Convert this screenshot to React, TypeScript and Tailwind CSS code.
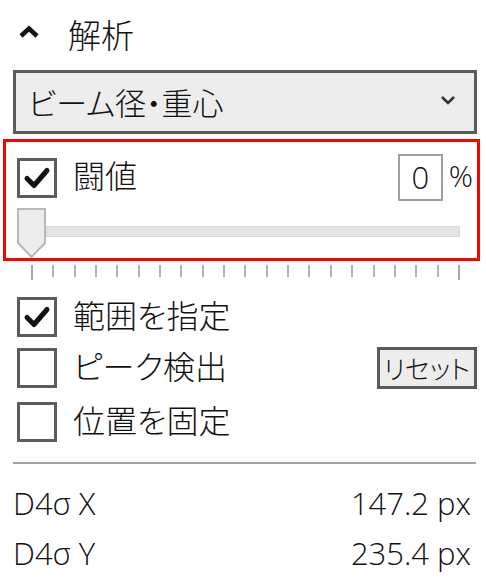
const jp = "[font-family:'Noto_Sans_CJK_JP',sans-serif] [font-feature-settings:'palt'] font-light";
const latin = "[font-family:'Open_Sans','Noto_Sans_CJK_JP',sans-serif] font-light";

function CheckBox({ checked }: { checked?: boolean }) {
  return (
    <div className="w-[40px] h-[40px] border-[3px] border-[#5c5c5c] bg-white flex items-center justify-center shrink-0">
      {checked && (
        <svg width="30" height="30" viewBox="0 0 30 30">
          <path d="M5 15.5 L12 22.5 L25 7.5" fill="none" stroke="#111" strokeWidth="5" strokeLinecap="round" strokeLinejoin="round" />
        </svg>
      )}
    </div>
  );
}

function Ticks() {
  const ticks = Array.from({ length: 21 }, (_, i) => i);
  return (
    <div className="ml-[18px] w-[429px] h-[16px] flex justify-between items-start">
      {ticks.map((i) => (
        <div
          key={i}
          className={i === 0 || i === 20 ? "w-[2px] h-[15px] bg-[#a8a8a8]" : "w-[2px] h-[12px] bg-[#b4b4b4]"}
        />
      ))}
    </div>
  );
}

export default function App() {
  return (
    <div className="w-[486px] h-[581px] bg-white text-[#111] pl-[13px] overflow-hidden">
      <div className="mt-[16px] h-[36px] flex items-center">
        <svg className="ml-[5px] mt-[-4px]" width="22" height="14" viewBox="0 0 22 14">
          <path d="M3 11 L11 3.5 L19 11" fill="none" stroke="#111" strokeWidth="4.5" strokeLinejoin="miter" />
        </svg>
        <span className={`${jp} ml-[28px] text-[33px] leading-none`}>解析</span>
      </div>

      <div className="mt-[18px] w-[464px] h-[64px] border-[3px] border-[#5a5a5a] bg-[#ededed] flex items-center justify-between pl-[12px] pr-[18px]">
        <span className={`${jp} text-[31px] leading-none -mt-[2px]`}>ビーム径・重心</span>
        <svg width="16" height="10" viewBox="0 0 16 10" className="-mt-[4px]">
          <path d="M2 2 L8 8 L14 2" fill="none" stroke="#333" strokeWidth="2.5" />
        </svg>
      </div>

      <div className="-ml-[10px] mt-[5px] w-[477px] h-[122px] border-[3px] border-[#ff0000] pl-[11px]">
        <div className="mt-[12px] h-[47px] flex items-center">
          <CheckBox checked />
          <span className={`${jp} ml-[16px] text-[32px] leading-none -mt-[8px]`}>闘値</span>
          <div className="ml-auto w-[45px] h-[47px] border-2 border-[#a0a0a0] flex items-center justify-center">
            <span className={`${latin} text-[31px] leading-none`}>0</span>
          </div>
          <span className={`${latin} ml-[6px] mr-[4px] text-[30px] leading-none -mt-[4px]`}>%</span>
        </div>
        <div className="mt-[7px] h-[50px] flex items-start">
          <svg width="29" height="50" viewBox="0 0 29 50" className="shrink-0">
            <path d="M1 1 H28 V35 L14.5 49 L1 35 Z" fill="#ececec" stroke="#b8b8b8" strokeWidth="2" />
          </svg>
          <div className="mt-[18px] w-[414px] h-[11px] bg-[#e3e3e3] border border-[#d6d6d6]" />
        </div>
      </div>

      <div className="mt-[4px]">
        <Ticks />
      </div>

      <div className="mt-[16px] flex flex-col">
        <div className="ml-[4px] h-[40px] flex items-center">
          <CheckBox checked />
          <span className={`${jp} ml-[16px] text-[32px] leading-none -mt-[6px]`}>範囲を指定</span>
        </div>
        <div className="ml-[4px] mt-[11px] h-[40px] flex items-center pr-[9px]">
          <CheckBox />
          <span className={`${jp} ml-[16px] text-[32px] leading-none -mt-[6px]`}>ピーク検出</span>
          <div className="ml-auto w-[100px] h-[42px] border-[3px] border-[#5a5a5a] bg-[#ededed] flex items-center justify-center">
            <span className={`${jp} text-[26px] leading-none`}>リセット</span>
          </div>
        </div>
        <div className="ml-[4px] mt-[14px] h-[40px] flex items-center">
          <CheckBox />
          <span className={`${jp} ml-[16px] text-[32px] leading-none -mt-[6px]`}>位置を固定</span>
        </div>
      </div>

      <div className="mt-[20px] w-[463px] h-[2px] bg-[#a3a3a3]" />

      <div className={`${latin} mt-[14px] w-[458px] flex flex-col text-[31px] leading-none`}>
        <div className="h-[50px] flex items-center justify-between">
          <span>D4σ X</span>
          <span>147.2 px</span>
        </div>
        <div className="h-[50px] flex items-center justify-between">
          <span>D4σ Y</span>
          <span>235.4 px</span>
        </div>
      </div>
    </div>
  );
}
